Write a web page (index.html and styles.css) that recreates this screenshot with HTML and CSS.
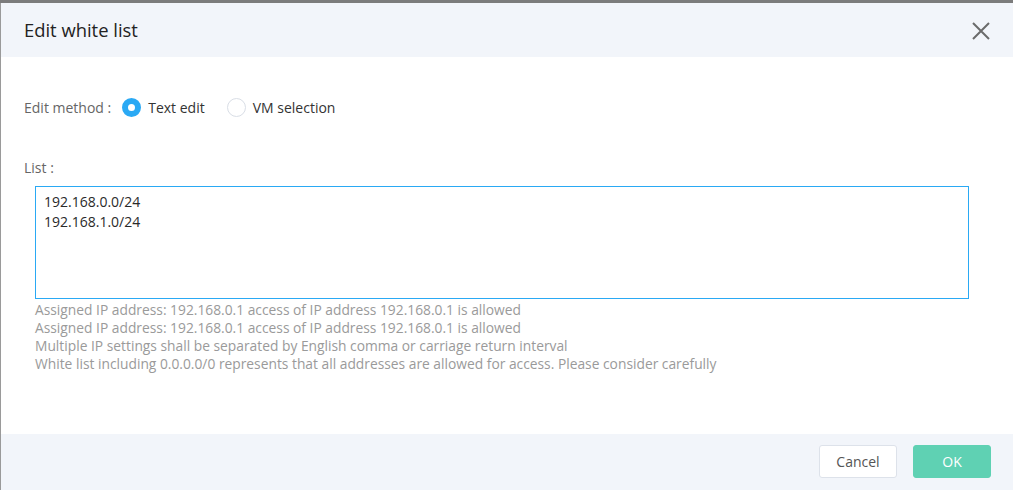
FILE: index.html
```html
<!DOCTYPE html>
<html>
<head>
<meta charset="utf-8">
<link rel="stylesheet" href="styles.css">
</head>
<body>
<div class="topbar"></div>
<div class="dialog">
  <div class="header">
    <div class="title">Edit white list</div>
    <svg class="close" width="20" height="20" viewBox="0 0 20 20"><path d="M2 2L18 18M18 2L2 18" stroke="#6b6b6b" stroke-width="2" fill="none"/></svg>
  </div>
  <div class="body">
    <div class="method">
      <span class="label">Edit method :</span>
      <label class="radio"><span class="dot checked"></span><span>Text edit</span></label>
      <label class="radio"><span class="dot"></span><span>VM selection</span></label>
    </div>
    <div class="list-label">List :</div>
    <div class="textarea"><div>192.168.0.0/24</div><div>192.168.1.0/24</div></div>
    <div class="hints">
      <div>Assigned IP address: 192.168.0.1 access of IP address 192.168.0.1 is allowed</div>
      <div>Assigned IP address: 192.168.0.1 access of IP address 192.168.0.1 is allowed</div>
      <div>Multiple IP settings shall be separated by English comma or carriage return interval</div>
      <div>White list including 0.0.0.0/0 represents that all addresses are allowed for access. Please consider carefully</div>
    </div>
  </div>
  <div class="footer">
    <button class="btn cancel">Cancel</button>
    <button class="btn ok">OK</button>
  </div>
</div>
</body>
</html>
```
FILE: styles.css
```css
html, body { margin: 0; padding: 0; }
body {
  width: 1013px; height: 490px; overflow: hidden;
  font-family: "Open Sans", "Noto Sans", sans-serif;
  background: #fff;
}
.topbar { height: 3px; background: #7c7c7c; }
.dialog {
  height: 487px;
  border-left: 1px solid #9a9a9a;
  display: flex; flex-direction: column;
}
.header {
  height: 54px; background: #f2f5fa;
  display: flex; align-items: center; justify-content: space-between;
  padding: 0 22px 0 23px;
}
.title { font-size: 18.4px; color: #222; margin-top: -2px; }
.close { display: block; margin-top: 1px; }
.body { flex: 1; padding: 0 44px 0 23px; }
.method {
  display: flex; align-items: center; margin-top: 40px; height: 20px;
  font-size: 14px; color: #333;
}
.method .label { color: #666; margin-right: 11px; }
.radio { display: flex; align-items: center; margin-right: 22px; }
.dot {
  border-radius: 50%;
  border: 1px solid #d9dee6; background: #fff; margin-right: 7px; box-sizing: border-box;
  width: 19px; height: 19px;
}
.dot.checked { border: 6px solid #2aa9f4; }
.list-label { margin-top: 41px; font-size: 14px; color: #666; line-height: 20px; }
.textarea {
  margin: 8px 0 0 11px;
  border: 1px solid #2aa9f4; padding: 5px 8px;
  font-size: 14px; color: #2a2a2a; line-height: 20px;
  box-sizing: border-box; height: 113px;
}
.hints { margin-left: 11px; margin-top: 2px; font-size: 13.8px; color: #9a9a9a; line-height: 18px; }
.footer {
  height: 56px; background: #f2f5fa;
  display: flex; align-items: center; justify-content: flex-end;
  padding-right: 22px; gap: 16px;
}
.btn {
  width: 78px; height: 33px; border-radius: 3px; font-family: inherit; font-size: 14px;
  cursor: pointer; margin-top: -1px;
}
.cancel { background: #fff; border: 1px solid #dde2ea; color: #555; }
.ok { background: #5fd1b3; border: 1px solid #5fd1b3; color: #fff; }
```
